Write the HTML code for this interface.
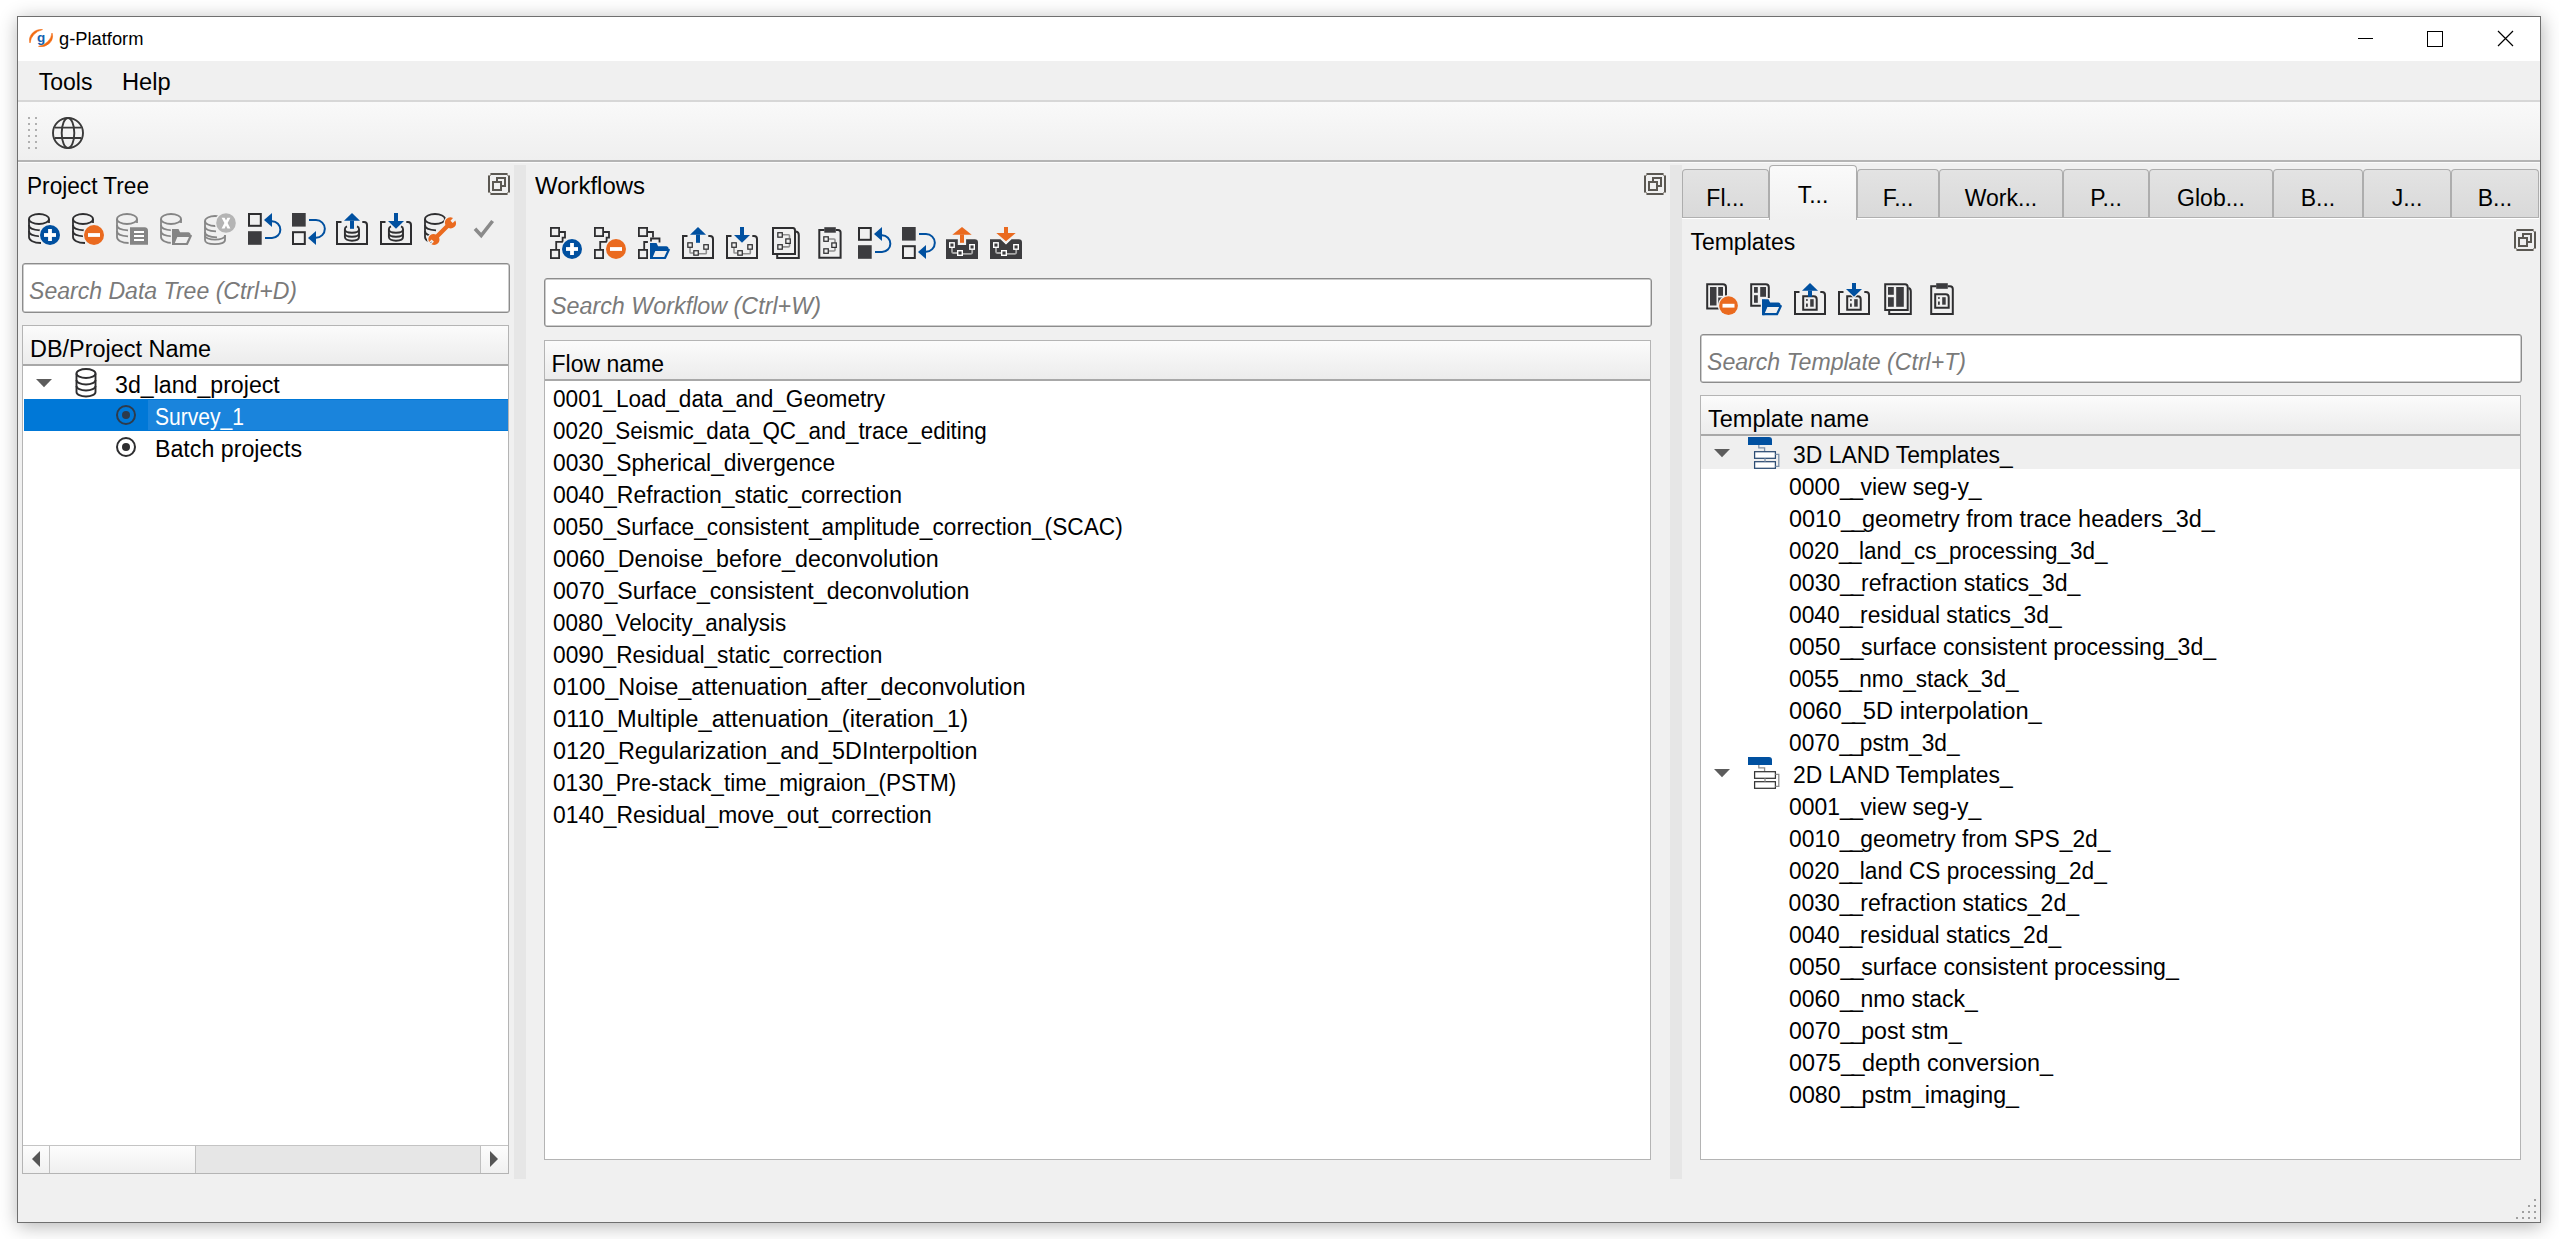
<!DOCTYPE html><html><head><meta charset="utf-8"><style>
html,body{margin:0;padding:0;}
body{width:2559px;height:1239px;position:relative;overflow:hidden;background:#fff;font-family:"Liberation Sans", sans-serif;}
.t{position:absolute;white-space:nowrap;transform-origin:0 50%;}
svg{display:block;}
</style></head><body><div style="position:absolute;left:17px;top:16px;width:2522px;height:1205px;border:1px solid #6f6f6f;background:#f0f0f0;box-shadow:1px 3px 18px rgba(0,0,0,0.30);"></div><div style="position:absolute;left:18px;top:17px;width:2522px;height:44px;background:#fff;"></div><svg style="position:absolute;left:28px;top:28px;" width="26" height="20" viewBox="0 0 26 20"><path d="M2 15A11.5 10.5 0 0 1 14.5 1.6A17 15 0 0 0 2 15z" fill="#f26a10" stroke="#f26a10" stroke-width="0.6"/><path d="M24 5A11.5 10.5 0 0 1 10.5 18.4A17 15 0 0 0 24 5z" fill="#f26a10" stroke="#f26a10" stroke-width="0.6"/><text x="13.2" y="13.6" font-family="Liberation Sans" font-weight="bold" font-size="13.5" fill="#1262b0" text-anchor="middle">g</text></svg><div class="t" style="left:58.80px;top:27.06px;font-size:18px;line-height:25px;color:#000;transform:scaleX(1.0169);">g-Platform</div><div style="position:absolute;left:2358px;top:38px;width:15px;height:1.3px;background:#000;"></div><div style="position:absolute;left:2427px;top:31px;width:13.5px;height:13.5px;border:1.1px solid #000;"></div><svg style="position:absolute;left:2497px;top:30px;" width="17" height="17" viewBox="0 0 17 17"><path d="M1 1L16 16M16 1L1 16" stroke="#000" stroke-width="1.2"/></svg><div style="position:absolute;left:18px;top:61px;width:2522px;height:39px;background:#f0f0f0;"></div><div style="position:absolute;left:18px;top:100px;width:2522px;height:2px;background:#d7d7d7;"></div><div class="t" style="left:38.70px;top:65.73px;font-size:23px;line-height:32px;color:#000;">Tools</div><div class="t" style="left:122.40px;top:65.73px;font-size:23px;line-height:32px;color:#000;transform:scaleX(1.0286);">Help</div><div style="position:absolute;left:18px;top:102px;width:2522px;height:58px;background:linear-gradient(#f9f9f9,#efefef);"></div><div style="position:absolute;left:18px;top:160px;width:2522px;height:2px;background:#b4b4b4;"></div><div style="position:absolute;left:18px;top:162px;width:2522px;height:1px;background:#fbfbfb;"></div><div style="position:absolute;left:28px;top:117px;width:2px;height:2px;background:#b0b0b0;"></div><div style="position:absolute;left:35px;top:117px;width:2px;height:2px;background:#b0b0b0;"></div><div style="position:absolute;left:28px;top:123px;width:2px;height:2px;background:#b0b0b0;"></div><div style="position:absolute;left:35px;top:123px;width:2px;height:2px;background:#b0b0b0;"></div><div style="position:absolute;left:28px;top:129px;width:2px;height:2px;background:#b0b0b0;"></div><div style="position:absolute;left:35px;top:129px;width:2px;height:2px;background:#b0b0b0;"></div><div style="position:absolute;left:28px;top:135px;width:2px;height:2px;background:#b0b0b0;"></div><div style="position:absolute;left:35px;top:135px;width:2px;height:2px;background:#b0b0b0;"></div><div style="position:absolute;left:28px;top:141px;width:2px;height:2px;background:#b0b0b0;"></div><div style="position:absolute;left:35px;top:141px;width:2px;height:2px;background:#b0b0b0;"></div><div style="position:absolute;left:28px;top:147px;width:2px;height:2px;background:#b0b0b0;"></div><div style="position:absolute;left:35px;top:147px;width:2px;height:2px;background:#b0b0b0;"></div><svg style="position:absolute;left:52px;top:117px;" width="32" height="32" viewBox="0 0 32 32"><g fill="none" stroke="#3a3a3a" stroke-width="1.9"><circle cx="16" cy="16" r="15"/><ellipse cx="16" cy="16" rx="6.3" ry="15"/><path d="M2.8 10.6H29.2M2.8 21H29.2"/></g></svg><div style="position:absolute;left:514px;top:165px;width:12px;height:1014px;background:#e6e6e6;"></div><div style="position:absolute;left:1670px;top:165px;width:12px;height:1014px;background:#e6e6e6;"></div><div class="t" style="left:27.10px;top:169.93px;font-size:23px;line-height:32px;color:#000;transform:scaleX(0.9839);">Project Tree</div><svg style="position:absolute;left:488px;top:173px;" width="22" height="22" viewBox="0 0 22 22"><g shape-rendering="crispEdges"><path fill="#5b5852" d="M2 0H20V2H2zM2 20H20V22H2zM0 2H2V20H0zM20 2H22V20H20z"/><path fill="#9c9892" d="M2 0H3V3H0V2H2zM19 0H20V2H22V3H19zM0 19H3V22H2V20H0zM19 19H22V20H20V22H19z"/><path fill="#5b5852" fill-rule="evenodd" d="M8 4H18V14H8zM10 6V12H16V6z"/><rect x="4" y="8" width="10" height="10" fill="#f0f0f0"/><path fill="#5b5852" fill-rule="evenodd" d="M4 8H14V18H4zM6 10V16H12V10z"/></g></svg><svg style="position:absolute;left:28px;top:213px;" width="34" height="34" viewBox="0 0 34 34"><g fill="none" stroke="#2e2e30" stroke-width="1.8"><ellipse cx="11" cy="6" rx="10" ry="5"/><path d="M1 6V24C1 27.3 5.5 29.9 13 30"/><path d="M1 12C1 15 5 17 12 17.3"/><path d="M1 18C1 21 5 23 12 23.3"/><path d="M21 6V10"/></g><circle cx="22" cy="22" r="11.2" fill="#f0f0f0"/><circle cx="22" cy="22" r="10" fill="#0050a0"/><rect x="16" y="20.1" width="12" height="3.8" fill="#fff"/><rect x="20.1" y="16" width="3.8" height="12" fill="#fff"/></svg><svg style="position:absolute;left:72px;top:213px;" width="34" height="34" viewBox="0 0 34 34"><g fill="none" stroke="#2e2e30" stroke-width="1.8"><ellipse cx="11" cy="6" rx="10" ry="5"/><path d="M1 6V24C1 27.3 5.5 29.9 13 30"/><path d="M1 12C1 15 5 17 12 17.3"/><path d="M1 18C1 21 5 23 12 23.3"/><path d="M21 6V10"/></g><circle cx="22" cy="22" r="11.2" fill="#f0f0f0"/><circle cx="22" cy="22" r="10" fill="#ea6a1f"/><rect x="16" y="20.1" width="12" height="3.8" fill="#fff"/></svg><svg style="position:absolute;left:116px;top:213px;" width="34" height="34" viewBox="0 0 34 34"><g fill="none" stroke="#858585" stroke-width="1.8"><ellipse cx="11" cy="6" rx="10" ry="5"/><path d="M1 6V24C1 27.3 5.5 29.9 13 30"/><path d="M1 12C1 15 5 17 12 17.3"/><path d="M1 18C1 21 5 23 12 23.3"/><path d="M21 6V10"/></g><rect x="12.6" y="12.7" width="20" height="20" fill="#f0f0f0"/><path d="M14 14.2H28.5Q32 14.2 32 17.7V31.8H14z" fill="#858585"/><rect x="18" y="18" width="10" height="2" fill="#fff"/><rect x="18" y="22" width="10" height="2" fill="#fff"/><rect x="18" y="26" width="10" height="2" fill="#fff"/></svg><svg style="position:absolute;left:160px;top:213px;" width="34" height="34" viewBox="0 0 34 34"><g fill="none" stroke="#858585" stroke-width="1.8"><ellipse cx="11" cy="6" rx="10" ry="5"/><path d="M1 6V24C1 27.3 5.5 29.9 13 30"/><path d="M1 12C1 15 5 17 12 17.3"/><path d="M1 18C1 21 5 23 12 23.3"/><path d="M21 6V10"/></g><rect x="10.8" y="14.8" width="22" height="18" fill="#f0f0f0"/><path d="M12 16h6.5l1.6 3.2h8.2c1.3 0 2.2 1 2.2 2.2v0.6H17.5L14 29.5V16z" fill="#858585"/><path d="M16.6 22.8H30.8L27 31H13.2z" fill="none" stroke="#858585" stroke-width="2.2" stroke-linejoin="round"/><rect x="12" y="16" width="2.4" height="16" fill="#858585"/></svg><svg style="position:absolute;left:204px;top:213px;" width="34" height="34" viewBox="0 0 34 34"><g fill="none" stroke="#868686" stroke-width="1.8"><ellipse cx="11" cy="8" rx="10" ry="5"/><path d="M1 8V27C1 29.8 5.5 31.2 11 31.2S21 29.8 21 27V22"/><path d="M1 13.5C1 16.5 5 18 12 18.3"/><path d="M1 19C1 22 5 24 13 24.3"/><path d="M1 22.5C1 25 5.5 26.6 11 26.6S21 25 21 22.5"/></g><circle cx="22" cy="10" r="11.2" fill="#f0f0f0"/><circle cx="22" cy="10" r="9.8" fill="#b4b4b4"/><path d="M17.6 4.8H20.6L22 7.6L23.4 4.8H26.4L23.6 10L26.4 15.4H23.4L22 12.5L20.6 15.4H17.6L20.4 10z" fill="#fff"/></svg><svg style="position:absolute;left:248px;top:213px;" width="34" height="34" viewBox="0 0 34 34"><rect x="1" y="1" width="11.8" height="11.8" fill="none" stroke="#2e2e30" stroke-width="2"/><rect x="0" y="18.2" width="13.7" height="13.6" fill="#3c3c3f"/><path d="M17 25H24A8.3 8.3 0 0 0 24 8.3" fill="none" stroke="#0050a0" stroke-width="2"/><path d="M16 7L24 0V14z" fill="#0050a0"/></svg><svg style="position:absolute;left:292px;top:213px;" width="34" height="34" viewBox="0 0 34 34"><rect x="0" y="0" width="13.7" height="13.6" fill="#3c3c3f"/><rect x="1" y="19.2" width="11.8" height="11.8" fill="none" stroke="#2e2e30" stroke-width="2"/><path d="M17 7H24A8.3 8.3 0 0 1 24 24.7" fill="none" stroke="#0050a0" stroke-width="2"/><path d="M16 25L24 18V32z" fill="#0050a0"/></svg><svg style="position:absolute;left:336px;top:213px;" width="34" height="34" viewBox="0 0 34 34"><path d="M5.5 9H1V31H31V12Q31 9 28 9H26.3" fill="none" stroke="#2e2e30" stroke-width="2"/><g fill="none" stroke="#2e2e30" stroke-width="1.9"><path d="M11 13.3C9 14 8.9 15 8.9 16V24C8.9 26.2 12 27.7 16 27.7S23 26.2 23 24V16C23 15 23 14 21 13.3"/><path d="M8.9 16.5C8.9 18.5 12 19.7 16 19.7S23 18.5 23 16.5"/><path d="M8.9 20.5C8.9 22.5 12 23.7 16 23.7S23 22.5 23 20.5"/></g><path d="M6.5 8.6L16.0 -1.5L25.5 8.6z" fill="#f0f0f0"/><rect x="12.8" y="7.8" width="6.4" height="9.2" fill="#f0f0f0"/><path d="M8 7.8L16.0 0L24 7.8z" fill="#0050a0"/><rect x="14.0" y="7.6" width="4" height="8.2" fill="#0050a0"/></svg><svg style="position:absolute;left:380px;top:213px;" width="34" height="34" viewBox="0 0 34 34"><path d="M5.5 9H1V31H31V12Q31 9 28 9H26.3" fill="none" stroke="#2e2e30" stroke-width="2"/><g fill="none" stroke="#2e2e30" stroke-width="1.9"><path d="M11 13.3C9 14 8.9 15 8.9 16V24C8.9 26.2 12 27.7 16 27.7S23 26.2 23 24V16C23 15 23 14 21 13.3"/><path d="M8.9 16.5C8.9 18.5 12 19.7 16 19.7S23 18.5 23 16.5"/><path d="M8.9 20.5C8.9 22.5 12 23.7 16 23.7S23 22.5 23 20.5"/></g><rect x="12.8" y="0" width="6.4" height="8" fill="#f0f0f0"/><path d="M6.2 7.2H25.8L16.0 17.6z" fill="#f0f0f0"/><rect x="14.0" y="0" width="4" height="8.2" fill="#0050a0"/><path d="M8 8H24L16.0 15.8z" fill="#0050a0"/></svg><svg style="position:absolute;left:424px;top:213px;" width="34" height="34" viewBox="0 0 34 34"><g fill="none" stroke="#2e2e30" stroke-width="1.8"><ellipse cx="11" cy="6" rx="10" ry="5"/><path d="M1 6V24C1 27.3 5.5 29.9 13 30"/><path d="M1 12C1 15 5 17 12 17.3"/><path d="M1 18C1 21 5 23 12 23.3"/><path d="M21 6V10"/></g><g transform="translate(18.2 18.2) rotate(-45)"><path stroke="#f0f0f0" stroke-width="2.6" stroke-linejoin="round" fill="#f0f0f0" d="M-11.5 -5.6A5.6 5.6 0 0 0 -16.9 -1.6H-13.3V1.6H-16.9A5.6 5.6 0 0 0 -11.5 5.6A5.6 5.6 0 0 0 -6.7 2.2H6.7A5.6 5.6 0 0 0 11.5 5.6A5.6 5.6 0 0 0 16.9 1.6H13.3V-1.6H16.9A5.6 5.6 0 0 0 11.5 -5.6A5.6 5.6 0 0 0 6.7 -2.2H-6.7A5.6 5.6 0 0 0 -11.5 -5.6z"/></g><g transform="translate(18.2 18.2) rotate(-45)"><path fill="#ea6a1f" d="M-11.5 -5.6A5.6 5.6 0 0 0 -16.9 -1.6H-13.3V1.6H-16.9A5.6 5.6 0 0 0 -11.5 5.6A5.6 5.6 0 0 0 -6.7 2.2H6.7A5.6 5.6 0 0 0 11.5 5.6A5.6 5.6 0 0 0 16.9 1.6H13.3V-1.6H16.9A5.6 5.6 0 0 0 11.5 -5.6A5.6 5.6 0 0 0 6.7 -2.2H-6.7A5.6 5.6 0 0 0 -11.5 -5.6z"/></g></svg><svg style="position:absolute;left:468px;top:213px;" width="34" height="34" viewBox="0 0 34 34"><path d="M7 15.8L13.2 22.5L24.6 8" fill="none" stroke="#8a8a8a" stroke-width="3.6"/></svg><div style="position:absolute;left:22px;top:263px;width:486px;height:48px;border:1px solid #8c8c8c;border-radius:3px;background:#fff;box-shadow:inset 0 0 0 0.5px #9a9a9a;"></div><div class="t" style="left:28.50px;top:274.53px;font-size:23px;line-height:32px;color:#7a7a7a;font-style:italic;transform:scaleX(1.0023);">Search Data Tree (Ctrl+D)</div><div style="position:absolute;left:22px;top:325px;width:485px;height:847px;border:1px solid #b4b4b4;background:#fff;"></div><div style="position:absolute;left:23px;top:326px;width:485px;height:38px;background:linear-gradient(#fbfbfb,#ececec);"></div><div style="position:absolute;left:23px;top:364px;width:485px;height:2px;background:#a8a8a8;"></div><div class="t" style="left:29.50px;top:333.33px;font-size:23px;line-height:32px;color:#000;transform:scaleX(1.0190);">DB/Project Name</div><svg style="position:absolute;left:36px;top:379px;" width="16" height="9" viewBox="0 0 16 9"><path d="M0 0H16L8 8.2z" fill="#5c5c5c"/></svg><svg style="position:absolute;left:75px;top:368px;" width="22" height="30" viewBox="0 0 22 30"><g fill="none" stroke="#2e2e30" stroke-width="1.9"><ellipse cx="11" cy="5.5" rx="9.5" ry="4.5"/><path d="M1.5 5.5V24C1.5 26.5 5.7 28.5 11 28.5S20.5 26.5 20.5 24V5.5"/><path d="M1.5 12C1.5 14.5 5.7 16.5 11 16.5S20.5 14.5 20.5 12"/><path d="M1.5 18C1.5 20.5 5.7 22.5 11 22.5S20.5 20.5 20.5 18"/></g></svg><div class="t" style="left:115.00px;top:369.03px;font-size:23px;line-height:32px;color:#000;transform:scaleX(1.0066);">3d_land_project</div><div style="position:absolute;left:24px;top:399px;width:484px;height:32px;background:#0078d7;"></div><div style="position:absolute;left:148px;top:400px;width:360px;height:30px;background:#1a84dc;"></div><svg style="position:absolute;left:115px;top:404px;" width="22" height="22" viewBox="0 0 22 22"><circle cx="11" cy="11" r="9" fill="none" stroke="#2e3b4b" stroke-width="2"/><circle cx="11" cy="11" r="4" fill="#2e3b4b"/></svg><div class="t" style="left:154.80px;top:401.03px;font-size:23px;line-height:32px;color:#fff;transform:scaleX(0.9163);">Survey_1</div><svg style="position:absolute;left:115px;top:436px;" width="22" height="22" viewBox="0 0 22 22"><circle cx="11" cy="11" r="9" fill="none" stroke="#2e2e30" stroke-width="2"/><circle cx="11" cy="11" r="4" fill="#2e2e30"/></svg><div class="t" style="left:155.40px;top:433.03px;font-size:23px;line-height:32px;color:#000;transform:scaleX(1.0086);">Batch projects</div><div style="position:absolute;left:23px;top:1145px;width:485px;height:1px;background:#c4c4c4;"></div><div style="position:absolute;left:23px;top:1146px;width:485px;height:27px;background:#e6e6e6;"></div><div style="position:absolute;left:23px;top:1146px;width:27px;height:27px;background:linear-gradient(#fdfdfd,#f0f0f0);"></div><div style="position:absolute;left:49px;top:1146px;width:1px;height:27px;background:#c0c0c0;"></div><div style="position:absolute;left:50px;top:1146px;width:145px;height:27px;background:linear-gradient(#fdfdfd,#efefef);"></div><div style="position:absolute;left:195px;top:1146px;width:1px;height:27px;background:#c0c0c0;"></div><div style="position:absolute;left:480px;top:1146px;width:1px;height:27px;background:#c0c0c0;"></div><div style="position:absolute;left:481px;top:1146px;width:27px;height:27px;background:linear-gradient(#fdfdfd,#f0f0f0);"></div><svg style="position:absolute;left:32px;top:1151px;" width="9" height="16" viewBox="0 0 9 16"><path d="M8 0V16L0 8z" fill="#555"/></svg><svg style="position:absolute;left:490px;top:1151px;" width="9" height="16" viewBox="0 0 9 16"><path d="M0 0V16L8 8z" fill="#555"/></svg><div class="t" style="left:534.60px;top:169.73px;font-size:23px;line-height:32px;color:#000;transform:scaleX(1.0414);">Workflows</div><svg style="position:absolute;left:1644px;top:173px;" width="22" height="22" viewBox="0 0 22 22"><g shape-rendering="crispEdges"><path fill="#5b5852" d="M2 0H20V2H2zM2 20H20V22H2zM0 2H2V20H0zM20 2H22V20H20z"/><path fill="#9c9892" d="M2 0H3V3H0V2H2zM19 0H20V2H22V3H19zM0 19H3V22H2V20H0zM19 19H22V20H20V22H19z"/><path fill="#5b5852" fill-rule="evenodd" d="M8 4H18V14H8zM10 6V12H16V6z"/><rect x="4" y="8" width="10" height="10" fill="#f0f0f0"/><path fill="#5b5852" fill-rule="evenodd" d="M4 8H14V18H4zM6 10V16H12V10z"/></g></svg><svg style="position:absolute;left:550px;top:227px;" width="34" height="34" viewBox="0 0 34 34"><g fill="none" stroke="#2e2e30" stroke-width="1.8"><rect x="0.9" y="0.9" width="8.2" height="8.2"/><rect x="0.9" y="22.9" width="8.2" height="8.2"/><path d="M9 5H15V10.6H12.6V14.8H6.2V23"/></g><circle cx="22" cy="22" r="11.2" fill="#f0f0f0"/><circle cx="22" cy="22" r="10" fill="#0050a0"/><rect x="16" y="20.1" width="12" height="3.8" fill="#fff"/><rect x="20.1" y="16" width="3.8" height="12" fill="#fff"/></svg><svg style="position:absolute;left:594px;top:227px;" width="34" height="34" viewBox="0 0 34 34"><g fill="none" stroke="#2e2e30" stroke-width="1.8"><rect x="0.9" y="0.9" width="8.2" height="8.2"/><rect x="0.9" y="22.9" width="8.2" height="8.2"/><path d="M9 5H15V10.6H12.6V14.8H6.2V23"/></g><circle cx="22" cy="22" r="11.2" fill="#f0f0f0"/><circle cx="22" cy="22" r="10" fill="#ea6a1f"/><rect x="16" y="20.1" width="12" height="3.8" fill="#fff"/></svg><svg style="position:absolute;left:638px;top:227px;" width="34" height="34" viewBox="0 0 34 34"><g fill="none" stroke="#2e2e30" stroke-width="1.8"><rect x="0.9" y="0.9" width="8.2" height="8.2"/><rect x="0.9" y="22.9" width="8.2" height="8.2"/><path d="M9 5H15V10.6"/><path d="M6.2 23V15H9.9"/><path d="M13 14.5V11.5H21.5V15.5"/></g><path d="M12 16h6.5l1.6 3.2h8.2c1.3 0 2.2 1 2.2 2.2v0.6H17.5L14 29.5V16z" fill="#0050a0"/><path d="M16.6 22.8H30.8L27 31H13.2z" fill="none" stroke="#0050a0" stroke-width="2.2" stroke-linejoin="round"/><rect x="12" y="16" width="2.4" height="16" fill="#0050a0"/></svg><svg style="position:absolute;left:682px;top:227px;" width="34" height="34" viewBox="0 0 34 34"><path d="M5.5 9H1V31H31V12Q31 9 28 9H26.3" fill="none" stroke="#2e2e30" stroke-width="2"/><path d="M8 20.6V25.3Q8 26 8.7 26H11.2M16.8 26.8H23.5Q24.3 26.8 24.3 26V22.8" fill="none" stroke="#8f8f8f" stroke-width="1.6"/><rect x="5.825" y="15.825" width="4.45" height="4.45" fill="none" stroke="#2e2e30" stroke-width="1.25"/><rect x="11.825" y="23.725" width="4.45" height="4.45" fill="none" stroke="#2e2e30" stroke-width="1.25"/><rect x="21.825" y="17.725" width="4.45" height="4.45" fill="none" stroke="#2e2e30" stroke-width="1.25"/><path d="M6.5 8.6L16.0 -1.5L25.5 8.6z" fill="#f0f0f0"/><rect x="12.8" y="7.8" width="6.4" height="9.2" fill="#f0f0f0"/><path d="M8 7.8L16.0 0L24 7.8z" fill="#0050a0"/><rect x="14.0" y="7.6" width="4" height="8.2" fill="#0050a0"/></svg><svg style="position:absolute;left:726px;top:227px;" width="34" height="34" viewBox="0 0 34 34"><path d="M5.5 9H1V31H31V12Q31 9 28 9H26.3" fill="none" stroke="#2e2e30" stroke-width="2"/><path d="M8 20.6V25.3Q8 26 8.7 26H11.2M16.8 26.8H23.5Q24.3 26.8 24.3 26V22.8" fill="none" stroke="#8f8f8f" stroke-width="1.6"/><rect x="5.825" y="15.825" width="4.45" height="4.45" fill="none" stroke="#2e2e30" stroke-width="1.25"/><rect x="11.825" y="23.725" width="4.45" height="4.45" fill="none" stroke="#2e2e30" stroke-width="1.25"/><rect x="21.825" y="17.725" width="4.45" height="4.45" fill="none" stroke="#2e2e30" stroke-width="1.25"/><rect x="12.8" y="0" width="6.4" height="8" fill="#f0f0f0"/><path d="M6.2 7.2H25.8L16.0 17.6z" fill="#f0f0f0"/><rect x="14.0" y="0" width="4" height="8.2" fill="#0050a0"/><path d="M8 8H24L16.0 15.8z" fill="#0050a0"/></svg><svg style="position:absolute;left:770px;top:227px;" width="34" height="34" viewBox="0 0 34 34"><path d="M3 1H23Q25 1 25 3.5V27H3z" fill="none" stroke="#2e2e30" stroke-width="2"/><path d="M26 4.5Q28.8 5 28.8 8V31H7.2V27.5" fill="none" stroke="#2e2e30" stroke-width="2"/><path d="M12.5 7.8H18.5Q19.5 7.8 19.5 8.8V11.3M12.5 19.9H18.5Q19.5 19.9 19.5 18.9V16.6" fill="none" stroke="#8f8f8f" stroke-width="1.6"/><rect x="7.825" y="5.725" width="4.45" height="4.45" fill="none" stroke="#2e2e30" stroke-width="1.25"/><rect x="15.825" y="11.925" width="4.45" height="4.45" fill="none" stroke="#2e2e30" stroke-width="1.25"/><rect x="7.825" y="17.725" width="4.45" height="4.45" fill="none" stroke="#2e2e30" stroke-width="1.25"/></svg><svg style="position:absolute;left:814px;top:227px;" width="34" height="34" viewBox="0 0 34 34"><path d="M10.5 3H5.3V30.8H26.6V5.5Q26.6 3 24 3H21.8" fill="none" stroke="#2e2e30" stroke-width="2"/><rect x="10.3" y="0.2" width="11.5" height="5.5" fill="#3c3c3f"/><path d="M14.5 12H20Q21 12 21 13V15.5M14.5 24H20Q21 24 21 23V20.7" fill="none" stroke="#8f8f8f" stroke-width="1.6"/><rect x="9.825" y="9.825" width="4.45" height="4.45" fill="none" stroke="#2e2e30" stroke-width="1.25"/><rect x="17.825" y="15.925" width="4.45" height="4.45" fill="none" stroke="#2e2e30" stroke-width="1.25"/><rect x="9.825" y="21.825" width="4.45" height="4.45" fill="none" stroke="#2e2e30" stroke-width="1.25"/></svg><svg style="position:absolute;left:858px;top:227px;" width="34" height="34" viewBox="0 0 34 34"><rect x="1" y="1" width="11.8" height="11.8" fill="none" stroke="#2e2e30" stroke-width="2"/><rect x="0" y="18.2" width="13.7" height="13.6" fill="#3c3c3f"/><path d="M17 25H24A8.3 8.3 0 0 0 24 8.3" fill="none" stroke="#0050a0" stroke-width="2"/><path d="M16 7L24 0V14z" fill="#0050a0"/></svg><svg style="position:absolute;left:902px;top:227px;" width="34" height="34" viewBox="0 0 34 34"><rect x="0" y="0" width="13.7" height="13.6" fill="#3c3c3f"/><rect x="1" y="19.2" width="11.8" height="11.8" fill="none" stroke="#2e2e30" stroke-width="2"/><path d="M17 7H24A8.3 8.3 0 0 1 24 24.7" fill="none" stroke="#0050a0" stroke-width="2"/><path d="M16 25L24 18V32z" fill="#0050a0"/></svg><svg style="position:absolute;left:946px;top:227px;" width="34" height="34" viewBox="0 0 34 34"><path d="M0 12.2H11.8V18H20.1V12.2H28.8Q32 12.2 32 15.4V32H0z" fill="#3c3c3f"/><path d="M6 20.8V24.8Q6 26 7.2 26H11M17 26.8H25Q26.2 26.8 26.2 25.6V22.9" fill="none" stroke="#a8a8a8" stroke-width="1.8"/><rect x="3.7" y="15.799999999999999" width="4.5" height="4.5" fill="#3c3c3f" stroke="#fff" stroke-width="1.4"/><rect x="11.7" y="23.7" width="4.6" height="4.6" fill="#3c3c3f" stroke="#fff" stroke-width="1.4"/><rect x="23.8" y="17.7" width="4.5" height="4.5" fill="#3c3c3f" stroke="#fff" stroke-width="1.4"/><path d="M6.3 7.7L16.0 0L25.7 7.7z" fill="#ea6a1f"/><rect x="14.0" y="7.5" width="4" height="8.3" fill="#ea6a1f"/></svg><svg style="position:absolute;left:990px;top:227px;" width="34" height="34" viewBox="0 0 34 34"><path d="M0 12.2H10.5L16 17.5L21.5 12.2H28.8Q32 12.2 32 15.4V32H0z" fill="#3c3c3f"/><path d="M4.5 6H27.5L16 17.2z" fill="#f0f0f0"/><path d="M6 20.8V24.8Q6 26 7.2 26H11M17 26.8H25Q26.2 26.8 26.2 25.6V22.9" fill="none" stroke="#a8a8a8" stroke-width="1.8"/><rect x="3.7" y="15.799999999999999" width="4.5" height="4.5" fill="#3c3c3f" stroke="#fff" stroke-width="1.4"/><rect x="11.7" y="23.7" width="4.6" height="4.6" fill="#3c3c3f" stroke="#fff" stroke-width="1.4"/><rect x="23.8" y="17.7" width="4.5" height="4.5" fill="#3c3c3f" stroke="#fff" stroke-width="1.4"/><rect x="14.0" y="0" width="4" height="6.2" fill="#ea6a1f"/><path d="M6.3 6H25.7L16.0 14.3z" fill="#ea6a1f"/></svg><div style="position:absolute;left:544px;top:278px;width:1106px;height:47px;border:1px solid #8c8c8c;border-radius:3px;background:#fff;box-shadow:inset 0 0 0 0.5px #9a9a9a;"></div><div class="t" style="left:550.50px;top:289.53px;font-size:23px;line-height:32px;color:#7a7a7a;font-style:italic;transform:scaleX(1.0131);">Search Workflow (Ctrl+W)</div><div style="position:absolute;left:544px;top:340px;width:1105px;height:818px;border:1px solid #b4b4b4;background:#fff;"></div><div style="position:absolute;left:545px;top:341px;width:1105px;height:38px;background:linear-gradient(#fbfbfb,#ececec);"></div><div style="position:absolute;left:545px;top:379px;width:1105px;height:2px;background:#a8a8a8;"></div><div class="t" style="left:551.50px;top:348.33px;font-size:23px;line-height:32px;color:#000;">Flow name</div><div class="t" style="left:552.90px;top:382.93px;font-size:23px;line-height:32px;color:#000;transform:scaleX(0.9839);">0001_Load_data_and_Geometry</div><div class="t" style="left:552.90px;top:414.93px;font-size:23px;line-height:32px;color:#000;transform:scaleX(0.9748);">0020_Seismic_data_QC_and_trace_editing</div><div class="t" style="left:552.90px;top:446.93px;font-size:23px;line-height:32px;color:#000;transform:scaleX(0.9894);">0030_Spherical_divergence</div><div class="t" style="left:552.90px;top:478.93px;font-size:23px;line-height:32px;color:#000;">0040_Refraction_static_correction</div><div class="t" style="left:552.90px;top:510.93px;font-size:23px;line-height:32px;color:#000;transform:scaleX(0.9859);">0050_Surface_consistent_amplitude_correction_(SCAC)</div><div class="t" style="left:552.90px;top:542.93px;font-size:23px;line-height:32px;color:#000;transform:scaleX(1.0120);">0060_Denoise_before_deconvolution</div><div class="t" style="left:552.90px;top:574.93px;font-size:23px;line-height:32px;color:#000;transform:scaleX(1.0047);">0070_Surface_consistent_deconvolution</div><div class="t" style="left:552.90px;top:606.93px;font-size:23px;line-height:32px;color:#000;transform:scaleX(0.9756);">0080_Velocity_analysis</div><div class="t" style="left:552.90px;top:638.93px;font-size:23px;line-height:32px;color:#000;transform:scaleX(0.9870);">0090_Residual_static_correction</div><div class="t" style="left:552.90px;top:670.93px;font-size:23px;line-height:32px;color:#000;transform:scaleX(1.0206);">0100_Noise_attenuation_after_deconvolution</div><div class="t" style="left:552.90px;top:702.93px;font-size:23px;line-height:32px;color:#000;transform:scaleX(1.0282);">0110_Multiple_attenuation_(iteration_1)</div><div class="t" style="left:552.90px;top:734.93px;font-size:23px;line-height:32px;color:#000;transform:scaleX(1.0150);">0120_Regularization_and_5DInterpoltion</div><div class="t" style="left:552.90px;top:766.93px;font-size:23px;line-height:32px;color:#000;transform:scaleX(0.9828);">0130_Pre-stack_time_migraion_(PSTM)</div><div class="t" style="left:552.90px;top:798.93px;font-size:23px;line-height:32px;color:#000;transform:scaleX(0.9940);">0140_Residual_move_out_correction</div><div style="position:absolute;left:1682px;top:217px;width:857px;height:1px;background:#b0b0b0;"></div><div style="position:absolute;left:1682px;top:218px;width:857px;height:1px;background:#ffffff;"></div><div style="position:absolute;left:1682px;top:169px;width:85px;height:47px;border:1px solid #adadad;border-bottom:none;border-radius:4px 4px 0 0;background:linear-gradient(#e3e3e3,#d9d9d9);"></div><div class="t" style="left:1682px;top:181.80px;width:87px;text-align:center;font-size:23px;line-height:32px;color:#000;">Fl...</div><div style="position:absolute;left:1857px;top:169px;width:80px;height:47px;border:1px solid #adadad;border-bottom:none;border-radius:4px 4px 0 0;background:linear-gradient(#e3e3e3,#d9d9d9);"></div><div class="t" style="left:1857px;top:181.80px;width:82px;text-align:center;font-size:23px;line-height:32px;color:#000;">F...</div><div style="position:absolute;left:1939px;top:169px;width:122px;height:47px;border:1px solid #adadad;border-bottom:none;border-radius:4px 4px 0 0;background:linear-gradient(#e3e3e3,#d9d9d9);"></div><div class="t" style="left:1939px;top:181.80px;width:124px;text-align:center;font-size:23px;line-height:32px;color:#000;">Work...</div><div style="position:absolute;left:2063px;top:169px;width:84px;height:47px;border:1px solid #adadad;border-bottom:none;border-radius:4px 4px 0 0;background:linear-gradient(#e3e3e3,#d9d9d9);"></div><div class="t" style="left:2063px;top:181.80px;width:86px;text-align:center;font-size:23px;line-height:32px;color:#000;">P...</div><div style="position:absolute;left:2149px;top:169px;width:122px;height:47px;border:1px solid #adadad;border-bottom:none;border-radius:4px 4px 0 0;background:linear-gradient(#e3e3e3,#d9d9d9);"></div><div class="t" style="left:2149px;top:181.80px;width:124px;text-align:center;font-size:23px;line-height:32px;color:#000;">Glob...</div><div style="position:absolute;left:2273px;top:169px;width:88px;height:47px;border:1px solid #adadad;border-bottom:none;border-radius:4px 4px 0 0;background:linear-gradient(#e3e3e3,#d9d9d9);"></div><div class="t" style="left:2273px;top:181.80px;width:90px;text-align:center;font-size:23px;line-height:32px;color:#000;">B...</div><div style="position:absolute;left:2363px;top:169px;width:86px;height:47px;border:1px solid #adadad;border-bottom:none;border-radius:4px 4px 0 0;background:linear-gradient(#e3e3e3,#d9d9d9);"></div><div class="t" style="left:2363px;top:181.80px;width:88px;text-align:center;font-size:23px;line-height:32px;color:#000;">J...</div><div style="position:absolute;left:2451px;top:169px;width:86px;height:47px;border:1px solid #adadad;border-bottom:none;border-radius:4px 4px 0 0;background:linear-gradient(#e3e3e3,#d9d9d9);"></div><div class="t" style="left:2451px;top:181.80px;width:88px;text-align:center;font-size:23px;line-height:32px;color:#000;">B...</div><div style="position:absolute;left:1769px;top:165px;width:86px;height:54px;border:1px solid #adadad;border-bottom:none;border-radius:4px 4px 0 0;background:linear-gradient(#fafafa,#f0f0f0);"></div><div class="t" style="left:1769px;top:179.10px;width:88px;text-align:center;font-size:23px;line-height:32px;color:#000;">T...</div><div class="t" style="left:1690.40px;top:225.73px;font-size:23px;line-height:32px;color:#000;">Templates</div><svg style="position:absolute;left:2514px;top:229px;" width="22" height="22" viewBox="0 0 22 22"><g shape-rendering="crispEdges"><path fill="#5b5852" d="M2 0H20V2H2zM2 20H20V22H2zM0 2H2V20H0zM20 2H22V20H20z"/><path fill="#9c9892" d="M2 0H3V3H0V2H2zM19 0H20V2H22V3H19zM0 19H3V22H2V20H0zM19 19H22V20H20V22H19z"/><path fill="#5b5852" fill-rule="evenodd" d="M8 4H18V14H8zM10 6V12H16V6z"/><rect x="4" y="8" width="10" height="10" fill="#f0f0f0"/><path fill="#5b5852" fill-rule="evenodd" d="M4 8H14V18H4zM6 10V16H12V10z"/></g></svg><svg style="position:absolute;left:1706px;top:283px;" width="34" height="34" viewBox="0 0 34 34"><path d="M1.2 1.2H17Q20 1.2 20 4.2V25.5H1.2z" fill="none" stroke="#2e2e30" stroke-width="2"/><rect x="4" y="4" width="6.5" height="18.5" fill="#3c3c3f"/><rect x="12.2" y="4" width="4.8" height="8.8" fill="#3c3c3f"/><rect x="12.2" y="14.5" width="4.8" height="8" fill="#3c3c3f"/><circle cx="22.5" cy="22.7" r="10.6" fill="#f0f0f0"/><circle cx="22.5" cy="22.7" r="9.4" fill="#ea6a1f"/><rect x="16.5" y="20.8" width="12" height="3.8" fill="#fff"/></svg><svg style="position:absolute;left:1750px;top:283px;" width="34" height="34" viewBox="0 0 34 34"><path d="M1.2 1.2H15.8Q18.8 1.2 18.8 4.2V22.8H1.2z" fill="none" stroke="#2e2e30" stroke-width="2"/><rect x="4" y="4" width="3.8" height="5.8" fill="#3c3c3f"/><rect x="4" y="12.2" width="3.8" height="7.6" fill="#3c3c3f"/><rect x="10.2" y="4" width="5.8" height="9.8" fill="#3c3c3f"/><rect x="10.8" y="15" width="22" height="18" fill="#f0f0f0"/><path d="M12 16.2h6.5l1.6 3.2h8.2c1.3 0 2.2 1 2.2 2.2v0.6H17.5L14 29.700000000000003V16.2z" fill="#0050a0"/><path d="M16.6 23.0H30.8L27 31.200000000000003H13.2z" fill="none" stroke="#0050a0" stroke-width="2.2" stroke-linejoin="round"/><rect x="12" y="16.2" width="2.4" height="16" fill="#0050a0"/></svg><svg style="position:absolute;left:1794px;top:283px;" width="34" height="34" viewBox="0 0 34 34"><path d="M5.5 9H1V31H31V12Q31 9 28 9H26.3" fill="none" stroke="#2e2e30" stroke-width="2"/><path d="M9.2 13.2H19.7Q22.7 13.2 22.7 16.2V26.7H9.2z" fill="none" stroke="#2e2e30" stroke-width="2"/><rect x="12.0" y="16.2" width="1.8" height="1.6" fill="#3c3c3f"/><rect x="12.0" y="20.5" width="1.8" height="3.3" fill="#3c3c3f"/><rect x="16.2" y="16.2" width="3.5" height="7.5" fill="#3c3c3f"/><path d="M6.5 8.6L16 -1.5L25.5 8.6z" fill="#f0f0f0"/><path d="M8 7.8L16.0 0L24 7.8z" fill="#0050a0"/><rect x="14.0" y="7.6" width="4" height="6.200000000000001" fill="#0050a0"/></svg><svg style="position:absolute;left:1838px;top:283px;" width="34" height="34" viewBox="0 0 34 34"><path d="M5.5 9H1V31H31V12Q31 9 28 9H26.3" fill="none" stroke="#2e2e30" stroke-width="2"/><path d="M9.2 13.2H19.7Q22.7 13.2 22.7 16.2V26.7H9.2z" fill="none" stroke="#2e2e30" stroke-width="2"/><rect x="12.0" y="16.2" width="1.8" height="1.6" fill="#3c3c3f"/><rect x="12.0" y="20.5" width="1.8" height="3.3" fill="#3c3c3f"/><rect x="16.2" y="16.2" width="3.5" height="7.5" fill="#3c3c3f"/><rect x="12.8" y="0" width="6.4" height="6" fill="#f0f0f0"/><path d="M6.2 5.2H25.8L16.0 15.600000000000001z" fill="#f0f0f0"/><rect x="14.0" y="0" width="4" height="6.2" fill="#0050a0"/><path d="M8 6H24L16.0 13.8z" fill="#0050a0"/></svg><svg style="position:absolute;left:1882px;top:283px;" width="34" height="34" viewBox="0 0 34 34"><path d="M3.2 1.2H23Q25.7 1.2 25.7 4V27H3.2z" fill="none" stroke="#2e2e30" stroke-width="2"/><path d="M26.5 5Q28.8 5.5 28.8 8.5V31H7.2V27.5" fill="none" stroke="#2e2e30" stroke-width="2"/><rect x="6" y="4" width="5.8" height="7.8" fill="#3c3c3f"/><rect x="6" y="14.2" width="5.8" height="9.6" fill="#3c3c3f"/><rect x="14.2" y="4" width="7.6" height="19.8" fill="#3c3c3f"/></svg><svg style="position:absolute;left:1926px;top:283px;" width="34" height="34" viewBox="0 0 34 34"><path d="M10.5 3.2H5.2V31H26.8V6Q26.8 3.2 24 3.2H21.8" fill="none" stroke="#2e2e30" stroke-width="2"/><rect x="10.2" y="0.2" width="11.6" height="5.6" fill="#3c3c3f"/><path d="M9.2 11.2H19.7Q22.7 11.2 22.7 14.2V24.7H9.2z" fill="none" stroke="#2e2e30" stroke-width="2"/><rect x="12.0" y="14.2" width="1.8" height="1.6" fill="#3c3c3f"/><rect x="12.0" y="18.5" width="1.8" height="3.3" fill="#3c3c3f"/><rect x="16.2" y="14.2" width="3.5" height="7.5" fill="#3c3c3f"/></svg><div style="position:absolute;left:1700px;top:334px;width:820px;height:47px;border:1px solid #8c8c8c;border-radius:3px;background:#fff;box-shadow:inset 0 0 0 0.5px #9a9a9a;"></div><div class="t" style="left:1706.50px;top:345.53px;font-size:23px;line-height:32px;color:#7a7a7a;font-style:italic;transform:scaleX(1.0039);">Search Template (Ctrl+T)</div><div style="position:absolute;left:1700px;top:395px;width:819px;height:763px;border:1px solid #b4b4b4;background:#fff;"></div><div style="position:absolute;left:1701px;top:396px;width:819px;height:38px;background:linear-gradient(#fbfbfb,#ececec);"></div><div style="position:absolute;left:1701px;top:434px;width:819px;height:2px;background:#a8a8a8;"></div><div class="t" style="left:1707.50px;top:403.33px;font-size:23px;line-height:32px;color:#000;transform:scaleX(1.0238);">Template name</div><div style="position:absolute;left:1701px;top:436px;width:819px;height:33px;background:#efefef;"></div><svg style="position:absolute;left:1714px;top:449px;" width="16" height="9" viewBox="0 0 16 9"><path d="M0 0H16L8 8.2z" fill="#5c5c5c"/></svg><svg style="position:absolute;left:1748px;top:437px;" width="34" height="34" viewBox="0 0 34 34"><path d="M0 0H21Q24 0 24 3V8H0z" fill="#0050a0"/><path d="M10.8 8V10.9H16.6V14.5" fill="none" stroke="#7f93ab" stroke-width="1.3"/><rect x="6.6" y="14.7" width="20.8" height="6.6" fill="#fff" stroke="#2a4a72" stroke-width="1.25"/><rect x="6.6" y="24.7" width="20.8" height="6.6" fill="#fff" stroke="#2a4a72" stroke-width="1.25"/><path d="M17 21.3V24.7M27.4 17.4H30.8V29.4H27.4" fill="none" stroke="#7f93ab" stroke-width="1.3"/></svg><div class="t" style="left:1793.00px;top:438.53px;font-size:23px;line-height:32px;color:#000;transform:scaleX(0.9958);">3D LAND Templates_</div><div class="t" style="left:1788.60px;top:471.33px;font-size:23px;line-height:32px;color:#000;transform:scaleX(0.9969);">0000<span style="letter-spacing:-2.5px">__</span>view seg-y_</div><div class="t" style="left:1788.60px;top:503.33px;font-size:23px;line-height:32px;color:#000;transform:scaleX(1.0182);">0010<span style="letter-spacing:-2.5px">__</span>geometry from trace headers_3d_</div><div class="t" style="left:1788.60px;top:535.33px;font-size:23px;line-height:32px;color:#000;transform:scaleX(0.9761);">0020<span style="letter-spacing:-2.5px">__</span>land_cs_processing_3d_</div><div class="t" style="left:1788.60px;top:567.33px;font-size:23px;line-height:32px;color:#000;transform:scaleX(1.0036);">0030<span style="letter-spacing:-2.5px">__</span>refraction statics_3d_</div><div class="t" style="left:1788.60px;top:599.33px;font-size:23px;line-height:32px;color:#000;transform:scaleX(0.9910);">0040<span style="letter-spacing:-2.5px">__</span>residual statics_3d_</div><div class="t" style="left:1788.60px;top:631.33px;font-size:23px;line-height:32px;color:#000;transform:scaleX(1.0027);">0050<span style="letter-spacing:-2.5px">__</span>surface consistent processing_3d_</div><div class="t" style="left:1788.60px;top:663.33px;font-size:23px;line-height:32px;color:#000;transform:scaleX(0.9800);">0055<span style="letter-spacing:-2.5px">__</span>nmo_stack_3d_</div><div class="t" style="left:1788.60px;top:695.33px;font-size:23px;line-height:32px;color:#000;transform:scaleX(1.0289);">0060<span style="letter-spacing:-2.5px">__</span>5D interpolation_</div><div class="t" style="left:1788.60px;top:727.33px;font-size:23px;line-height:32px;color:#000;transform:scaleX(0.9871);">0070<span style="letter-spacing:-2.5px">__</span>pstm_3d_</div><svg style="position:absolute;left:1714px;top:769px;" width="16" height="9" viewBox="0 0 16 9"><path d="M0 0H16L8 8.2z" fill="#5c5c5c"/></svg><svg style="position:absolute;left:1748px;top:757px;" width="34" height="34" viewBox="0 0 34 34"><path d="M0 0H21Q24 0 24 3V8H0z" fill="#0050a0"/><path d="M10.8 8V10.9H16.6V14.5" fill="none" stroke="#8e8e8e" stroke-width="1.3"/><rect x="6.6" y="14.7" width="20.8" height="6.6" fill="#fff" stroke="#333333" stroke-width="1.25"/><rect x="6.6" y="24.7" width="20.8" height="6.6" fill="#fff" stroke="#333333" stroke-width="1.25"/><path d="M17 21.3V24.7M27.4 17.4H30.8V29.4H27.4" fill="none" stroke="#8e8e8e" stroke-width="1.3"/></svg><div class="t" style="left:1793.00px;top:758.53px;font-size:23px;line-height:32px;color:#000;transform:scaleX(0.9954);">2D LAND Templates_</div><div class="t" style="left:1788.60px;top:791.33px;font-size:23px;line-height:32px;color:#000;transform:scaleX(0.9948);">0001<span style="letter-spacing:-2.5px">__</span>view seg-y_</div><div class="t" style="left:1788.60px;top:823.33px;font-size:23px;line-height:32px;color:#000;transform:scaleX(0.9936);">0010<span style="letter-spacing:-2.5px">__</span>geometry from SPS_2d_</div><div class="t" style="left:1788.60px;top:855.33px;font-size:23px;line-height:32px;color:#000;transform:scaleX(0.9857);">0020<span style="letter-spacing:-2.5px">__</span>land CS processing_2d_</div><div class="t" style="left:1788.60px;top:887.33px;font-size:23px;line-height:32px;color:#000;">0030<span style="letter-spacing:-2.5px">__</span>refraction statics_2d_</div><div class="t" style="left:1788.60px;top:919.33px;font-size:23px;line-height:32px;color:#000;transform:scaleX(0.9892);">0040<span style="letter-spacing:-2.5px">__</span>residual statics_2d_</div><div class="t" style="left:1788.60px;top:951.33px;font-size:23px;line-height:32px;color:#000;transform:scaleX(1.0057);">0050<span style="letter-spacing:-2.5px">__</span>surface consistent processing_</div><div class="t" style="left:1788.60px;top:983.33px;font-size:23px;line-height:32px;color:#000;transform:scaleX(0.9967);">0060<span style="letter-spacing:-2.5px">__</span>nmo stack_</div><div class="t" style="left:1788.60px;top:1015.33px;font-size:23px;line-height:32px;color:#000;transform:scaleX(1.0061);">0070<span style="letter-spacing:-2.5px">__</span>post stm_</div><div class="t" style="left:1788.60px;top:1047.33px;font-size:23px;line-height:32px;color:#000;transform:scaleX(1.0165);">0075<span style="letter-spacing:-2.5px">__</span>depth conversion_</div><div class="t" style="left:1788.60px;top:1079.33px;font-size:23px;line-height:32px;color:#000;transform:scaleX(1.0101);">0080<span style="letter-spacing:-2.5px">__</span>pstm_imaging_</div><div style="position:absolute;left:2534px;top:1199px;width:2px;height:2px;background:#a0a0a0;"></div><div style="position:absolute;left:2528px;top:1205px;width:2px;height:2px;background:#a0a0a0;"></div><div style="position:absolute;left:2534px;top:1205px;width:2px;height:2px;background:#a0a0a0;"></div><div style="position:absolute;left:2522px;top:1211px;width:2px;height:2px;background:#a0a0a0;"></div><div style="position:absolute;left:2528px;top:1211px;width:2px;height:2px;background:#a0a0a0;"></div><div style="position:absolute;left:2534px;top:1211px;width:2px;height:2px;background:#a0a0a0;"></div><div style="position:absolute;left:2516px;top:1217px;width:2px;height:2px;background:#a0a0a0;"></div><div style="position:absolute;left:2522px;top:1217px;width:2px;height:2px;background:#a0a0a0;"></div><div style="position:absolute;left:2528px;top:1217px;width:2px;height:2px;background:#a0a0a0;"></div><div style="position:absolute;left:2534px;top:1217px;width:2px;height:2px;background:#a0a0a0;"></div></body></html>
